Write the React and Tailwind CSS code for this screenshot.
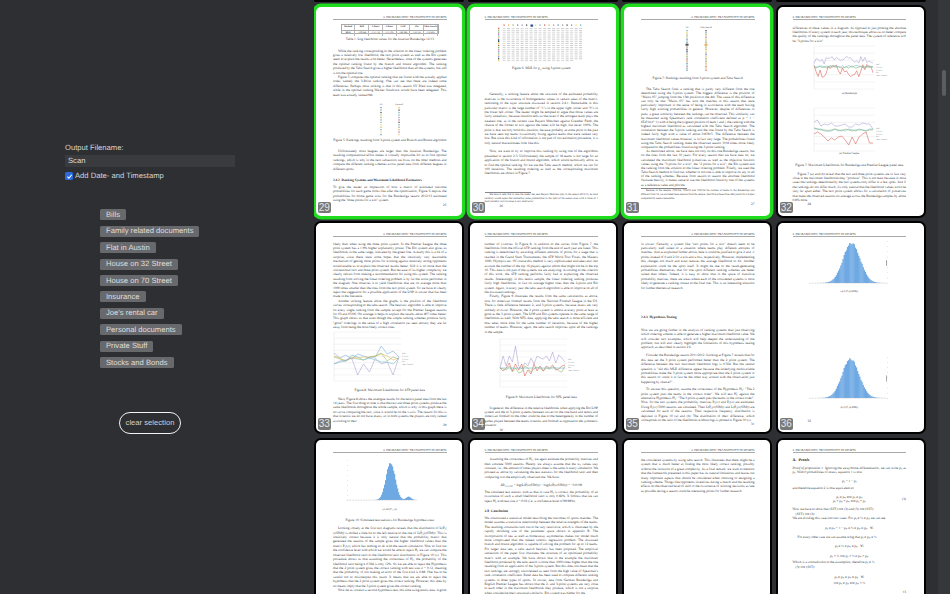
import React from "react";

const HEADER = "2. PROBABILISTIC TRANSITIVITY IN SPORTS";

function Page({ n, selected, even, foot, children }) {
  return (
    <div
      className={
        "relative h-[213px] w-[150px] overflow-hidden rounded-[7px] border-[2.5px] bg-white " +
        (selected ? "border-[#1fdc1f] shadow-[0_0_0_1.5px_#1fdc1f]" : "border-black")
      }
    >
      <div
        className={
          "flex h-full flex-col pt-[8.5px] pb-[9.3px] [font-family:'Liberation_Serif',serif] [text-rendering:geometricPrecision] text-[3.4px] leading-[4.4px] text-[#2a2a2a] " +
          (even ? "pl-[15px] pr-[17.5px]" : "pl-[17.5px] pr-[15px]")
        }
      >
        <div
          className={
            "h-[5px] shrink-0 border-b-[0.6px] border-[#aaa] text-[3.05px] leading-[4px] text-[#333] " +
            (even ? "text-left" : "text-right")
          }
        >
          {HEADER}
        </div>
        {children}
        {foot && (
          <div className={"mt-auto shrink-0 " + (even ? "text-left" : "text-right")}>{foot}</div>
        )}
      </div>
      <div className="absolute bottom-[2.5px] left-[2px] flex h-[11.5px] w-[13.5px] items-center justify-center rounded-[2px] bg-[#77787a] [font-family:'Liberation_Sans',sans-serif] text-[10px] leading-none text-[#e6e6e6]">
        {n}
      </div>
    </div>
  );
}

function P({ className = "", noIndent, children }) {
  return (
    <p className={"shrink-0 text-justify " + (noIndent ? "" : "indent-[5px] ") + className}>{children}</p>
  );
}
function Cap({ className = "", children }) {
  return <div className={"shrink-0 text-center " + className}>{children}</div>;
}
function H({ className = "", children }) {
  return <div className={"shrink-0 font-bold " + className}>{children}</div>;
}

function hash(i) {
  const x = Math.sin(i * 12.9898) * 43758.5453;
  return x - Math.floor(x);
}

function LogTable() {
  const head = ["Method", "Ball", "2-Point", "3-Point", "LOP", "Elo", "Tabu Search"];
  const row = ["MLE", "-129.844", "-131.732", "-131.393", "-140.046", "-132.783", "-130.405"];
  return (
    <div className="mt-[4px] flex h-[10px] w-[98px] shrink-0 flex-col self-center border-[0.4px] border-[#aaa] text-center text-[2.4px] leading-[4.6px]">
      <div className="grid grid-cols-7 border-b-[0.4px] border-[#aaa] font-bold">
        {head.map((h, i) => (
          <span key={i} className="border-r-[0.3px] border-[#bbb] whitespace-nowrap">{h}</span>
        ))}
      </div>
      <div className="grid grid-cols-7">
        {row.map((h, i) => (
          <span key={i} className={"border-r-[0.3px] border-[#bbb] " + (i === 0 ? "font-bold" : "")}>{h}</span>
        ))}
      </div>
    </div>
  );
}

const marks = ["#c9504a", "#e0a53c", "#7fa85a", "#4f78b5", "#8a8a8a", "#333", "#b25b9e", "#e7d04a", "#5aa7a7"];

function RankColumns({ a, b, count, ax, bx, w = 60, h = 35, step, big, seed = 0 }) {
  const start = 5;
  return (
    <svg viewBox={`0 0 ${w} ${h}`} className="shrink-0 self-center" style={{ width: w, height: h }}>
      <text x={ax} y="2.6" fontSize="2.4" textAnchor="middle" fontFamily="Liberation Serif" fill="#333">{a}</text>
      <text x={bx} y="2.6" fontSize="2.4" textAnchor="middle" fontFamily="Liberation Serif" fill="#333">{b}</text>
      {Array.from({ length: count }).map((_, i) => {
        const c1 = marks[Math.floor(hash(i + 1 + seed) * marks.length)];
        const c2 = marks[Math.floor(hash(i + 31 + seed) * marks.length)];
        const s1 = i === big ? 3 : 1.3;
        return (
          <g key={i}>
            <rect x={ax - s1 / 2} y={start + i * step} width={s1} height={i === big ? 2 : 1.3} fill={c1} opacity="0.85" />
            <rect x={bx - s1 / 2} y={start + i * step} width={s1} height={i === big ? 2 : 1.3} fill={c2} opacity="0.85" />
          </g>
        );
      })}
    </svg>
  );
}

function Matrix() {
  const n = 18;
  return (
    <svg viewBox="0 0 88 38" className="ml-[12px] h-[38px] w-[88px] shrink-0">
      {Array.from({ length: n }).map((_, i) => (
        <g key={i}>
          <rect x={6.5 + i * 4.5} y="0.5" width={i === 6 ? 2.6 : 1.2} height={i === 6 ? 2.2 : 1.2} fill={i === 6 ? "#2d4f86" : marks[i % marks.length]} />
          <rect x="1" y={3.8 + i * 1.9} width="1.3" height={i === 6 ? 1.7 : 1.1} fill={i === 6 ? "#2d4f86" : marks[(i * 2) % marks.length]} />
          {Array.from({ length: n }).map((_, j) => (
            (i < n - 1 || j < n - 2) && (
              <rect key={j} x={5.6 + j * 4.5} y={4 + i * 1.9} width="3" height="0.8" fill="#b4b4b4" opacity={0.55 + hash(i * 19 + j) * 0.3} />
            )
          ))}
        </g>
      ))}
    </svg>
  );
}

function series(count, base, amp, seed) {
  return Array.from({ length: count }).map((_, i) => base + (hash(i * 7 + seed) - 0.5) * amp);
}

function LineChart({ w, h, ml, lines, grid = 6, legendY, chartW, legend = ["Ball", "2-Point", "3-Point", "Elo", "Tabu Search"] }) {
  return (
    <svg viewBox={`0 0 ${w} ${h}`} className="shrink-0" style={{ width: w, height: h, marginLeft: ml }}>
      {Array.from({ length: grid }).map((_, i) => (
        <line key={i} x1="3" x2={chartW} y1={1 + (i * (h - 2)) / (grid - 1)} y2={1 + (i * (h - 2)) / (grid - 1)} stroke="#e4e4e4" strokeWidth="0.4" />
      ))}
      <line x1="3" x2="3" y1="1" y2={h - 1} stroke="#dcdcdc" strokeWidth="0.4" />
      {lines.map((l, i) => (
        <polyline
          key={i}
          fill="none"
          stroke={l.c}
          strokeWidth="0.55"
          points={l.d.map((y, k) => `${(3 + (k * (chartW - 5)) / (l.d.length - 1)).toFixed(1)},${y.toFixed(1)}`).join(" ")}
        />
      ))}
      {legend.map((t, i) => (
        <text key={i} x={chartW + 1} y={legendY + i * 2.8} fontSize="2" fontFamily="Liberation Sans" fill="#999">{t}</text>
      ))}
    </svg>
  );
}

function Histogram({ w, h, ml, peak, sigma, second, chartW, axisX }) {
  const bars = 70;
  const base = h - 3;
  return (
    <svg viewBox={`0 0 ${w} ${h}`} className="shrink-0" style={{ width: w, height: h, marginLeft: ml }}>
      {Array.from({ length: 9 }).map((_, i) => (
        <rect key={i} x={axisX} y={1 + (i * (h - 4)) / 8} width="0.9" height="0.5" fill="#c8c8c8" />
      ))}
      <rect x={axisX - 1} y={h / 2 - 3} width="1" height="6" fill="#aaa" />
      {Array.from({ length: bars }).map((_, i) => {
        const x = (i / bars) * chartW;
        let v = Math.exp(-((x - peak) ** 2) / (2 * sigma * sigma));
        if (second) v += 0.09 * Math.exp(-((x - second) ** 2) / 12);
        const noisy = v * (0.95 + hash(i + 5) * 0.08);
        const H2 = noisy * (h - 6);
        return (
          <rect key={i} x={x} y={base - H2} width={chartW / bars + 0.25} height={H2} fill="#6fa9e3" />
        );
      })}
      <line x1="0" x2={chartW} y1={base + 0.2} y2={base + 0.2} stroke="#bcbcbc" strokeWidth="0.7" strokeDasharray="0.8 0.8" />
    </svg>
  );
}

const Chips = ["Bills", "Family related documents", "Flat in Austin", "House on 32 Street", "House on 70 Street", "Insurance", "Joe's rental car", "Personal documents", "Private Stuff", "Stocks and Bonds"];

function Sidebar() {
  return (
    <aside className="flex h-full w-[313.5px] shrink-0 flex-col pl-[65px] pt-[143px] [font-family:'Liberation_Sans',sans-serif] [text-rendering:geometricPrecision] text-[7.65px] leading-[10px] text-[#d4d4d6]">
      <label className="h-[10px]">Output Filename:</label>
      <div className="mt-[2px] flex h-[12px] w-[170px] items-center bg-[#3a3b3f] pl-[3px] text-[#dcdcdc]">Scan</div>
      <div className="mt-[4px] flex h-[10px] items-center gap-[2px]">
        <span className="flex h-[8px] w-[8px] items-center justify-center rounded-[1.5px] bg-[#2a6ad9]">
          <svg viewBox="0 0 10 10" className="h-[7px] w-[7px]">
            <path d="M2 5.3 L4.2 7.5 L8.2 2.5" fill="none" stroke="#fff" strokeWidth="1.6" />
          </svg>
        </span>
        <span>Add Date- and Timestamp</span>
      </div>
      <div className="ml-[35px] mt-[28.3px] flex flex-col items-start gap-[5.44px]">
        {Chips.map((c) => (
          <span key={c} className="flex h-[11px] items-center whitespace-nowrap rounded-[1.5px] bg-[#68696c] px-[6px] text-[#dedede]">{c}</span>
        ))}
      </div>
      <button className="ml-[54px] mt-[44px] flex h-[21.5px] w-[62px] items-center justify-center rounded-full border-[1.5px] border-[#f2f2f2] text-[#d0d0d2]">clear selection</button>
    </aside>
  );
}

const purple = "#a99bd2", red = "#d8584f", green = "#8fb35f", blue = "#6fa6d8", teal = "#67b8c8";

export default function App() {
  return (
    <div className="flex h-[594px] w-[950px] overflow-hidden bg-[#2e2f33]">
      <Sidebar />
      <main className="flex w-[624.5px] shrink-0 flex-col overflow-hidden pr-[12px]">
        <div className="grid h-[1.7px] shrink-0 grid-cols-[repeat(4,150px)] gap-x-[4px]">
          <div className="rounded-b-[2px] bg-black" />
          <div className="rounded-b-[2px] bg-black" />
          <div className="rounded-b-[2px] bg-black" />
          <div className="rounded-b-[2px] bg-black" />
        </div>
        <div className="mt-[3.3px] grid shrink-0 grid-cols-[repeat(4,150px)] auto-rows-[213px] gap-x-[4px] gap-y-[3.3px]">
          <Page n="29" selected foot="25">
            <LogTable />
            <Cap className="mt-[2.3px]">Table 1: Log likelihood values for the Austrian Bundesliga 12/13</Cap>
            <P className="mt-[7.4px]">While the ranking corresponding to the solution to the linear ordering problem gives a relatively low likelihood, the two point system as well as the Elo system seem to explain the results a lot better. Nevertheless, none of the systems generates the optimal ranking found by the branch and bound algorithm. The ranking produced by the Tabu Search gives a higher likelihood than all the systems, but still is not the optimal one.</P>
            <P>Figure 5 compares the optimal ranking that we found with the actually applied order, namely the 3-Point ranking. One can see that there are indeed some differences. Perhaps most striking is that in this season SV Ried was relegated, while in the optimal ranking Wacker Innsbruck would have been relegated. This team was actually ranked 9th.</P>
            <div className="mt-[4.5px] shrink-0 self-center">
              <RankColumns a="3-P" b="Optimal" count={12} ax={21} bx={39} step={2.45} seed={3} />
            </div>
            <Cap className="mt-[1.5px]">Figure 5: Rankings resulting from 3-point system and Branch and Bound algorithm</Cap>
            <P className="mt-[6.6px]">Unfortunately most leagues are larger than the Austrian Bundesliga. The resulting computational effort makes it virtually impossible for us to find optimal rankings, which is why in the next subsection we focus on the other methods and compare the different ranking schemes across panel data from different leagues in different sports.</P>
            <H className="mt-[6.7px]">2.4.2 &nbsp;Ranking Systems and Maximum Likelihood Estimators</H>
            <P noIndent className="mt-[2.9px]">To give the reader an impression of how a matrix of estimated outcome probabilities for each game looks like after the optimization, Figure 6 depicts the probabilities for home game wins for the Bundesliga season 2012/13 estimated using the "three points for a win" system.</P>
          </Page>

          <Page n="30" selected even foot={<span className="ml-[15px]">26</span>}>
            <div className="mt-[4px]"><Matrix /></div>
            <Cap className="mt-[3.8px]">Figure 6: MLE for p<sub className="text-[2.2px]">i,j</sub> using 3-point system</Cap>
            <P className="mt-[21.6px]">Generally, a striking feature about the structure of the estimated probability matrices is the occurrence of homogeneous values in certain areas of the matrix, reminding of the layer structure discussed in section 2.4.1. Remarkable in this particular matrix is the large number of "1"s in the upper right corner and "0"s in the lower left corner. The reader might be tempted to argue that those values are fairly unrealistic, because intuition tells us that even if the strongest team plays the weakest one, as in the current case Bayern München against Greuther Fürth, the chance of the former to win against the latter will be high, but never 100%. The point is that we only hold this intuition, because probably at some point in the past we have seen top teams occasionally losing against teams that were ranked very low. But since this kind of information is not part of our estimation procedure, it is only natural that estimates look like this.</P>
            <P className="mt-[4.3px]">Now, we want to try to improve this ranking by using one of the algorithms presented in section 2.3. Unfortunately the sample of 18 teams is too large for an application of the branch and bound algorithm, which would technically allow us to find the optimal ranking. So we use the Tabu search method, which we run for 100 iterations. The resulting ordering as well as the corresponding maximum likelihoods are shown in Figure 7.</P>
            <div className="mt-[15.8px] w-[46px] shrink-0 border-t-[0.5px] border-[#888]" />
            <P className="mt-[0.6px] text-[2.6px] leading-[3.6px]">We have to add, that in case the reader has seen Bayern München play in the season 2012/13, he most certainly would agree that estimating some probabilities in the light of the season even with a value of 1 most probably only involves a very small error.</P>
          </Page>

          <Page n="31" selected foot="27">
            <div className="mt-[5px] shrink-0 self-center"><RankColumns a="3-P" b="Tabu Search" count={24} ax={17} bx={36} w={56} h={46} step={1.72} big={8} seed={9} /></div>
            <Cap className="mt-[4.5px]">Figure 7: Rankings resulting from 3-point system and Tabu Search</Cap>
            <div className="mt-[6.2px] shrink-0 leading-[4.17px]">
              <P>The Tabu Search finds a ranking that is partly very different from the one determined using the 3-point system. The biggest difference is the position of "Mainz 05" jumping from the 13th position to the 4th. The cause of this difference can only be that "Mainz 05" has won the matches in this season that were particularly important in the sense of being in accordance with the team having fairly high winning probabilities in general. However, despite of differences in parts, a great similarity between the rankings can be observed. This similarity can be measured using Spearman's rank correlation coefficient defined as ρ = 1 − 6Σd²/n(n²−1) with d being the (signed) position of team i and i, the ranking with the highest maximum likelihood as calculated with the Tabu Search algorithm. The correlation between the 3-point ranking and the one found by the Tabu Search is indeed fairly high with a value of about 0.87815. The difference between the maximum likelihood values however, is in fact very large. The probabilities found using the Tabu Search ranking make the observed season 1018 times more likely compared to the probabilities found using the 3-point ranking.</P>
              <P>As mentioned above, we have data not only on this one Bundesliga season, but on the ones from the last 10 years. For every season that we have data on, we calculated the maximum likelihood p-matrices as well as the objective function values using the "3 points for a win", the "2 points for a win", the Elo system and the ranking from the solution to the linear ordering problem. Finally, we used the Tabu Search method to find out, whether or not one is able to improve on any or all of the ranking schemes. Because from season to season the absolute likelihood fluctuate heavily, it makes sense to use the likelihood found by one of the systems as a reference value and plot the</P>
            </div>
            <div className="mt-[1px] w-[46px] shrink-0 border-t-[0.5px] border-[#888]" />
            <P className="mt-[0.5px] text-[2.6px] leading-[3.9px]">Because in the seasons 1993/94, 1994/95 and 1995/96 the number of teams in the Bundesliga was different from 18, we excluded these seasons from the sample. Sacrificing these three data points for a higher comparability seems reasonable.</P>
          </Page>

          <Page n="32" even foot={<span className="ml-[15px]">28</span>}>
            <P noIndent className="mt-[5.1px]">differences to these values in a diagram. As opposed to just plotting the absolute likelihoods of every system in each year, this technique allows us to better compare the quality of the rankings throughout the panel data. The system of reference will be "3 points for a win".</P>
            <div className="mt-[1.3px]">
              <LineChart w={78} h={45} ml={18} chartW={64} legendY={20} grid={7} lines={[
                { c: purple, d: series(30, 15, 8, 1) },
                { c: red, d: series(30, 26, 13, 2) },
                { c: green, d: series(30, 22, 2.5, 3) },
                { c: teal, d: series(30, 21.5, 2, 4) },
              ]} />
            </div>
            <Cap className="mt-[2.1px] text-[2.6px]">(a) Bundesliga</Cap>
            <div className="mt-[10.5px]">
              <LineChart w={78} h={45} ml={18} chartW={64} legendY={22} grid={7} lines={[
                { c: purple, d: [15, 13, 19, 17, 18, 16, 19, 19, 18, 17, 20, 20, 17, 18, 16, 17, 17, 22] },
                { c: red, d: [27, 25, 27, 30, 34, 31, 33, 30, 29, 33, 38, 30, 37, 30, 27, 25, 36, 36] },
                { c: green, d: [21, 22, 23, 23, 24, 23, 22, 23, 24, 22, 23, 24, 23, 23, 23, 24, 23, 23] },
                { c: teal, d: [21, 22, 22, 24, 24, 24, 22, 24, 23, 24, 22, 23, 24, 22, 23, 24, 22, 22] },
              ]} />
            </div>
            <Cap className="mt-[0.8px] text-[2.6px]">(a) Premier League</Cap>
            <Cap className="mt-[5.9px]">Figure 7: Maximum Likelihoods for Bundesliga and Premier League panel data</Cap>
            <P className="mt-[4.6px]">Figure 7 (a) and (b) reveal that the two and three point systems are in fact very close in the maximum likelihoods they "produce". This is not least because in most cases the rankings determined by the two systems only differ in a few spots. And if the rankings do not differ much, it's only natural that the likelihood values won't be very far apart either. The two point system allows for a calculation of p-matrices that make the observed seasons on average across the Bundesliga samples by about 0.8% more</P>
          </Page>

          <Page n="33" foot="29">
            <P noIndent className="mt-[4.8px]">likely than when using the three point system. In the Premier League the three point system has a 1.9% higher explanatory power. The Elo system also gives us likelihoods in the same range, indicated by the green line. Actually this is a bit of a surprise, since there were some hopes that the intuitively very reasonable mechanism of getting more points for winning against relatively strong opponents would enable us to explain the observed results better. Still it is no more than the conventional two and three point system. But because of its higher complexity we clearly refrain from making a recommendation for using this system. The ranking resulting from solving the linear ordering problem is by far the worst performer in the diagram. One observes it to yield likelihoods that are on average more than 1000 times smaller than the ones from the two point system. So we have to clearly reject the suggestion for a possible application of the LOP in soccer that has been made in the literature.</P>
            <P>Another striking feature about the graphs is the position of the likelihood curves corresponding to the tabu-search. The heuristic algorithm is able to improve on every single ranking from the sample, except for the Premier League seasons for 03 and 05/06. On average it helps to explain the results about 407 times better. This graph shows us that even though the simple ranking schemes produce fairly "good" orderings in the sense of a high correlation (as seen above), they are far away from being the most likely correct ones.</P>
            <div className="mt-[1.4px]">
              <LineChart w={92} h={51} ml={-2} chartW={70} legendY={23} grid={9} lines={[
                { c: blue, d: [22, 27, 24, 28, 23, 25, 27, 26, 15, 23, 20, 26] },
                { c: "#e8b04a", d: [25, 27, 30, 26, 27, 26, 26, 25, 23, 25, 29, 27] },
                { c: green, d: [26, 28, 30, 27, 28, 29, 26, 25, 22, 30, 26, 28] },
                { c: purple, d: [36, 30, 29, 30, 44, 33, 44, 27, 33, 34, 44, 26].map((v, i) => (i % 3 === 0 ? v - 3 : v)) },
                { c: teal, d: [33, 31, 30, 24, 26, 29, 27, 29, 31, 31, 33, 27] },
              ]} />
            </div>
            <Cap className="mt-[5.8px]">Figure 8: Maximum Likelihoods for ATP panel data</Cap>
            <P className="mt-[4.3px]">Next, Figure 8 shows the analogue results for the tennis panel data from the last 14 years. The first thing to note is that the two and three point systems produce the same likelihoods throughout the whole sample, which is why in this graph there is no curve comparing the two, since it would be on the x-axis. The reason for this is that in tennis we do not have draws, so in both systems the players are only ranked according to their</P>
          </Page>

          <Page n="34" even foot={<span className="ml-[15px]">30</span>}>
            <P noIndent className="mt-[4.8px]">number of victories. In Figure 8, in addition to the curves from Figure 7, the likelihoods from the official ATP ranking from the end of each year are listed. This ranking is determined by awarding different amounts of points for a stage that is reached in the Grand Slam Tournaments, the ATP World Tour Finals, the Masters 1000, Olympics etc. Of course this method is very sophisticated and takes also into account the number of the top 16 players against whom that might not be in the top 16. This data is not part of the systems we are analyzing. According to the criterion of this work, the ATP ranking performs fairly bad in explaining the observed results. Interestingly in this tennis sample, the linear ordering ranking produces fairly high likelihoods, in fact on average higher ones than the 2-point and Elo system. Again, in every year the tabu search algorithm is able to improve on all of the discussed rankings.</P>
            <P>Finally, Figure 9 illustrates the results from the same calculations as above, now for American football results from the National Football League in the US. There is little difference between 2- and 3 point systems, because draws are very unlikely to occur. However, the 2 point system is almost at every point at least as good as the 3 point system. The LOP and Elo systems operate in the same range of likelihoods as well. With NFL data, applying the tabu search is more efficient and thus takes more time for the same number of iterations, because of the higher number of teams. However, again, the tabu search improves upon all the rankings in the sample.</P>
            <div className="mt-[4.3px]">
              <LineChart w={85} h={50} ml={12} chartW={70} legendY={22} grid={9} lines={[
                { c: purple, d: [30, 18, 28, 18, 24, 8, 28, 31, 25, 28, 20, 26, 18, 20, 21, 18, 23, 14, 25, 17, 20, 24] },
                { c: red, d: [30, 33, 30, 25, 33, 26, 32, 26, 38, 32, 36, 26, 33, 28, 33, 28, 30, 27, 32, 31, 28, 27] },
                { c: green, d: [30, 31, 32, 28, 34, 30, 35, 34, 28, 30, 34, 31, 29, 30, 33, 30, 31, 29, 30, 33, 34, 28] },
                { c: teal, d: [30, 30, 30, 30, 30, 30, 30, 30, 30, 30, 30, 30, 30, 30, 30, 30, 30, 30, 30, 30, 30, 30] },
              ]} />
            </div>
            <Cap className="mt-[6.5px]">Figure 9: Maximum Likelihoods for NFL panel data</Cap>
            <P className="mt-[6.2px]">In general, the difference in the relative likelihoods when applying the Elo LOP system and the to 3-point systems between soccer on the one-hand and tennis and American football on the other could be due to the heterogeneity in the number of games played between the teams in tennis and football as opposed to the symmetric situation</P>
          </Page>

          <Page n="35" foot="31">
            <P noIndent className="mt-[4.8px]">in soccer. Certainly a system like "two points for a win" doesn't seem to be particularly well suited to a situation where teams play different amounts of matches. And as explained further above, here it could be justified to give 2 and -1 points instead of 0 and 2 for a win and a loss, respectively. However, implementing this changes not much and even reduces the average likelihood to lot. Another explanation could be the sport itself. It might be due to the result-generating probabilities themselves, that for one sport different ranking schemes are better suited than others. Indeed, it is easy to show that in the space of transitive probability matrices, there are areas where each of the considered systems is most likely to generate a ranking closest to the final one. This is an interesting direction for further theoretical research.</P>
            <H className="mt-[25.4px]">2.4.3 &nbsp;Hypothesis Testing</H>
            <P noIndent className="mt-[7.9px]">Now we are going further in the analysis of ranking systems than just observing which ordering scheme is able to generate a higher maximum likelihood value. We will consider two examples, which will help deepen the understanding of the problem, but will also clearly highlight the limitations of this hypothesis testing approach, as described in section 2.6.</P>
            <P className="mt-[3.7px]">Consider the Bundesliga season 2011/2012. Looking at Figure 7 reveals that for this data set the 3 point system performed better than the 2 point system. The difference between the two maximum likelihood logs is 0.564. But the central question is "did this MLE difference appear because the underlying multivariable probabilities make the 3 point system more appropriate than the 2 point system in this season or could it in fact be the other way around with the observation just happening by chance?".</P>
            <P className="mt-[2.9px]">To answer this question, assume the correctness of the Hypothesis H₀: "The 2 point system puts the teams in the correct order". We will test H₀ against the alternative Hypothesis H₁: "The 3 point system puts the teams in the correct order". Now, for the two systems the probability matrices P̂₂(σ) and P̂₃(σ) are estimated. Using P̂₂(σ) 5000 seasons are simulated. Then L(P̂₂|σ(SIM)) and L(P̂₃|σ(SIM)) are calculated for each of the seasons. Their respective frequency distribution is depicted in Figure 10 (a) and (b). The distribution of their difference, which corresponds to the ratio of the likelihoods without logs is plotted in Figure 10 (c).</P>
          </Page>

          <Page n="36" even foot={<span className="ml-[15px]">32</span>}>
            <div className="mt-[3.7px]">
              <Histogram w={80} h={46} ml={16} peak={42} sigma={8.5} chartW={78} axisX={78} />
            </div>
            <Cap className="mt-[3.8px] text-[2.6px]">(a) L(P̂₂|σ(SIM))</Cap>
            <div className="mt-[61.8px]">
              <Histogram w={80} h={45} ml={16} peak={41} sigma={8.5} chartW={78} axisX={78} />
            </div>
            <Cap className="mt-[4.4px] text-[2.6px]">(b) L(P̂₃|σ(SIM))</Cap>
          </Page>

          <Page n="37">
            <div className="mt-[5.7px]">
              <Histogram w={72} h={44} ml={14} peak={43} sigma={4.5} second={61} chartW={70} axisX={0} />
            </div>
            <Cap className="mt-[5.1px] text-[2.6px]">(c) ΔL(P̂₂,₃|σ)</Cap>
            <Cap className="mt-[5.6px]">Figure 10: Simulated test statistics for Bundesliga hypothesis test</Cap>
            <P className="mt-[4px]">Looking closely at the first two diagrams reveals that the distribution of L(P̂₃|σ(SIM)) is shifted a little bit to the left relative to the one of L(P̂₂|σ(SIM)). This is intuitively correct because it is only natural that the probability matrix that generated the seasons of the sample gives the higher likelihood values than the matrix P̂₃(σ), which has nothing to do with the season simulation. Now to find out the confidence level with which we would be able to reject H₀ we can compare the observed likelihood ratio to the likelihood ratio distribution in Figure 10 (c). This procedure shows us that assuming the correctness of H₀, the probability of the likelihood ratio being ≤ 0.564 is only 12%. So we are able to reject the Hypothesis that the 2 point system gives the correct ranking with test size α = 0.12, meaning that the probability of not making an error of the first kind is 0.88. One has to be careful not to misinterpret this result. It means that we are able to reject the hypothesis that the 2 point system gives the correct ranking. However, this does by no means imply that the 3 point system gives the correct ranking.</P>
            <P>Now let us conduct a second hypothesis test, this time using tennis data. A good</P>
          </Page>

          <Page n="38" even>
            <P className="mt-[4.2px]">Assuming the correctness of H₀, we again estimate the probability matrices and then simulate 5000 seasons. Hereby we always assume that the wᵢⱼ values stay constant, i.e., the amount of times players meet is the same in every simulation. We proceed as above by calculating the test statistics for the likelihood ratio and then comparing it to the empirically observed one. We have:</P>
            <Cap className="mt-[4px]">ΔR<sub className="text-[2.2px]">A,3,LOP</sub> = log(L(P̂|σ(SIM))) − log(L(P̂|σ(SIM))) = −0.0109</Cap>
            <P noIndent className="mt-[2.2px]">The simulated test statistic with as that in case H₀ is correct, the probability of an occurrence of such a small likelihood ratio is only 0.82%. It follows that we can reject H₀ with test size α = 0.02 (i.e. a confidence level of 99.98%).</P>
            <H className="mt-[5.6px] text-[3.6px]">2.8 &nbsp;Conclusion</H>
            <P noIndent className="mt-[2.8px]">We constructed a statistical model describing the outcomes of sports matches. The model assumes a transitive relationship between the relative strengths of the teams. The resulting constraints turn out to be very restrictive, which is illustrated by the rapidly shrinking size of the parameter space shown in appendix B. The incorporation of ties as well as home/away asymmetries makes our model much more complicated than the related isotonic regression problem. The discussed branch and bound algorithm is capable of solving the problem for up to 12 teams. For larger data sets, a tabu search heuristic has been proposed. The empirical subsection of the paper first illustrates the structure of an optimized probability matrix with an example. We have shown that in the example the maximum likelihood produced by the tabu search is more than 1000 times higher than the one resulting from an application of the 3-point system. But this does not mean that the two rankings are strongly uncorrelated as seen from the high value of Spearman's rank correlation coefficient. Panel data has been used to compare different ranking systems in three types of sports. In soccer, data from German Bundesliga and English Premier League has shown that the 2- and 3-point systems are very close to each other in the maximum likelihoods they produce, which is not a surprise when considering their structural similarity. Elo system was higher for the</P>
          </Page>

          <Page n="39">
            <P noIndent className="mt-[4.8px]">the considered systems by using tabu search. This illustrates that there might be a system that is much better at finding the most likely correct ranking, possibly without the inclusion of a great complexity. As a final remark, we want to mention that the framework presented in this paper has its natural limitations and leaves out many important aspects that should be considered when choosing or designing a ranking scheme. Things like opponents incentives during a match and the resulting effects on the observed level of skill or the occurrence of winning decisions as late as possible during a season could be interesting points for further research.</P>
          </Page>

          <Page n="40" even>
            <H className="mt-[5.3px] text-[4px] leading-[4.8px]">A. &nbsp;Proofs</H>
            <P noIndent className="mt-[2.7px]"><i>Proof of proposition 1.</i> Ignoring the away/home differentiation, we can write pᵢⱼ as pᵢⱼ. With 0 probabilities of draws, equation 1 is now</P>
            <Cap className="mt-[4.2px]">pᵢⱼ = 1 − pⱼᵢ</Cap>
            <P noIndent className="mt-[3px]">and therefore equation 2 is thus equivalent to</P>
            <div className="relative mt-[4.2px] shrink-0 text-center">
              <div>pᵢⱼ ≥ pᵢₖ ⟺ pᵢⱼ ≥ pⱼₖ</div>
              <div>pᵢⱼ + pⱼₖ + pₖᵢ ⟺ pᵢⱼ + pⱼᵢ</div>
              <span className="absolute right-0 top-[2.2px]">(3)</span>
            </div>
            <P noIndent className="mt-[3.6px]">Now we have to show that (SST) ⟹ (3) and (3) ⟹ (SST).<br /><span className="ml-[3px]">(SST) ⟹ (3):</span><br />We are dividing this case into two cases: For pᵢⱼ ≥ ½ ≥ pⱼₖ we can see</P>
            <Cap className="mt-[5.4px]">pᵢⱼ ≥ pᵢₖ = 1 − pₖᵢ ≥ ½ ≥ pⱼₖ ≥ pⱼₖ &nbsp; ∀i</Cap>
            <P className="mt-[4.3px]">For every other case we can assume wlog that pᵢⱼ ≥ pⱼₖ ≥ ½</P>
            <Cap className="mt-[5.2px]">pᵢⱼ ≥ ½ ≥ pᵢₖ ≥ pⱼₖ &nbsp; ∀i</Cap>
            <Cap className="mt-[5.2px]">pᵢⱼ &lt; ½ ⟹ pⱼᵢ &gt; ½ ≥ pᵢₖ &gt; pⱼₖ</Cap>
            <P noIndent className="mt-[2.3px]">Which is a contradiction to the assumption, therefore pᵢⱼ ≥ ½.<br /><span className="ml-[3px]">(3) ⟹ (SST):</span></P>
            <Cap className="mt-[5.5px]">pᵢⱼ ≥ pⱼₖ ≥ pᵢₖ ≥ pⱼₖ &nbsp; ∀i</Cap>
            <Cap className="mt-[2.3px]">⟹ pᵢⱼ ≥ pⱼₖ ⟺ pᵢₖ &lt; ½</Cap>
            <div className="mt-[4.5px] shrink-0 text-right">13</div>
          </Page>
        </div>
      </main>
      <div className="flex h-full w-[12px] shrink-0 justify-center bg-[#36373b] pt-[70px]">
        <div className="h-[26px] w-[4.5px] rounded-full bg-[#5c5d61]" />
      </div>
    </div>
  );
}
